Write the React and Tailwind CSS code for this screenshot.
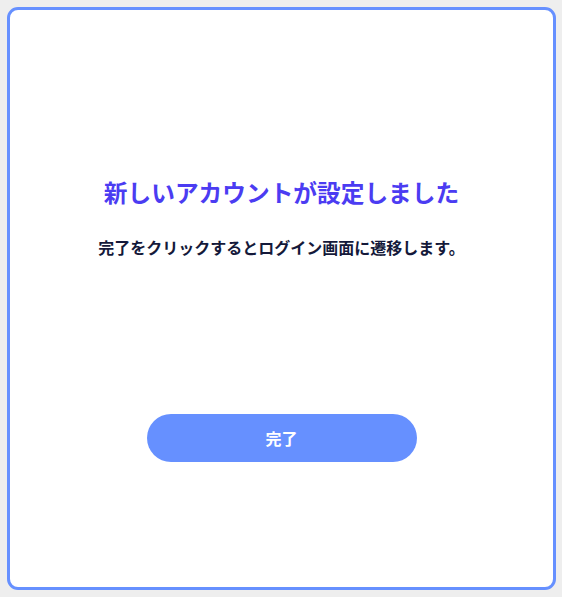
export default function App() {
  return (
    <div className="min-h-[597px] w-[562px] bg-[#eeeeee] pt-[7px] pl-[7px]" style={{ fontFamily: '"Noto Sans CJK JP", "Noto Sans", sans-serif' }}>
      <div className="flex h-[583px] w-[549px] flex-col items-center rounded-[11px] border-[3px] border-[#6690ff] bg-white pt-[166px]">
        <h1 className="text-[23.7px] leading-[32px] font-bold text-[#4b3cf2]">新しいアカウントが設定しました</h1>
        <p className="mt-[27px] text-[16px] leading-[24px] font-bold text-[#14193a]">完了をクリックするとログイン画面に遷移します。</p>
        <button className="mt-[155px] h-[48px] w-[270px] rounded-full bg-[#6690ff] text-[16px] font-bold text-white">完了</button>
      </div>
    </div>
  );
}
